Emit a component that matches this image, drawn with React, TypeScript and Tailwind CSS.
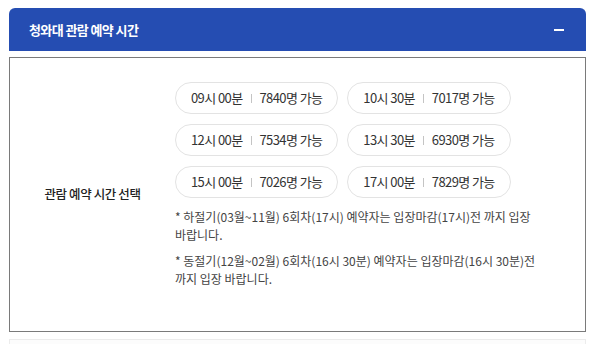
import React from "react";

const slots = [
  ["09시 00분", "7840명 가능"],
  ["10시 30분", "7017명 가능"],
  ["12시 00분", "7534명 가능"],
  ["13시 30분", "6930명 가능"],
  ["15시 00분", "7026명 가능"],
  ["17시 00분", "7829명 가능"],
];

function Pill({ time, count }: { time: string; count: string }) {
  return (
    <div className="flex h-8 items-center rounded-full border border-[#e3e3e3] bg-white px-[15px] text-[13px] text-[#333] tracking-[-0.6px]">
      <span>{time}</span>
      <span className="mx-2 h-[9px] w-px bg-[#c4c4c4]" />
      <span>{count}</span>
    </div>
  );
}

export default function App() {
  const rows = [slots.slice(0, 2), slots.slice(2, 4), slots.slice(4, 6)];
  return (
    <div
      className="w-[600px] h-[344px] overflow-hidden bg-white pt-2"
      style={{ fontFamily: '"Noto Sans CJK KR", "Noto Sans", sans-serif' }}
    >
      <div className="mx-[9px] mr-[14px]">
        <div className="flex h-[43px] items-center justify-between rounded-t-[6px] bg-[#254db2] pl-[20px] pr-[22px]">
          <span className="text-[13px] font-semibold text-white tracking-[-0.6px]">청와대 관람 예약 시간</span>
          <span className="block h-[2px] w-[10px] bg-white" />
        </div>
        <div className="mt-[6px] flex h-[275px] border border-[#7a7a7a]">
          <div className="flex w-[165px] items-center justify-center text-[12.5px] font-medium text-[#222] tracking-[-0.4px]">
            관람 예약 시간 선택
          </div>
          <div className="flex flex-col pt-6">
            <div className="flex flex-col gap-[10px]">
              {rows.map((r, i) => (
                <div key={i} className="flex gap-[9px]">
                  {r.map(([t, c]) => (
                    <Pill key={t} time={t} count={c} />
                  ))}
                </div>
              ))}
            </div>
            <div className="mt-[10px] flex flex-col gap-[8px] text-[12px] leading-[18px] text-[#444] tracking-[0px] whitespace-nowrap">
              <p>
                * 하절기(03월~11월) 6회차(17시) 예약자는 입장마감(17시)전 까지 입장
                <br />
                바랍니다.
              </p>
              <p>
                * 동절기(12월~02월) 6회차(16시 30분) 예약자는 입장마감(16시 30분)전
                <br />
                까지 입장 바랍니다.
              </p>
            </div>
          </div>
        </div>
        <div className="mt-[7px] h-[20px] border border-[#ececec] bg-[#fcfcfc]" />
      </div>
    </div>
  );
}
